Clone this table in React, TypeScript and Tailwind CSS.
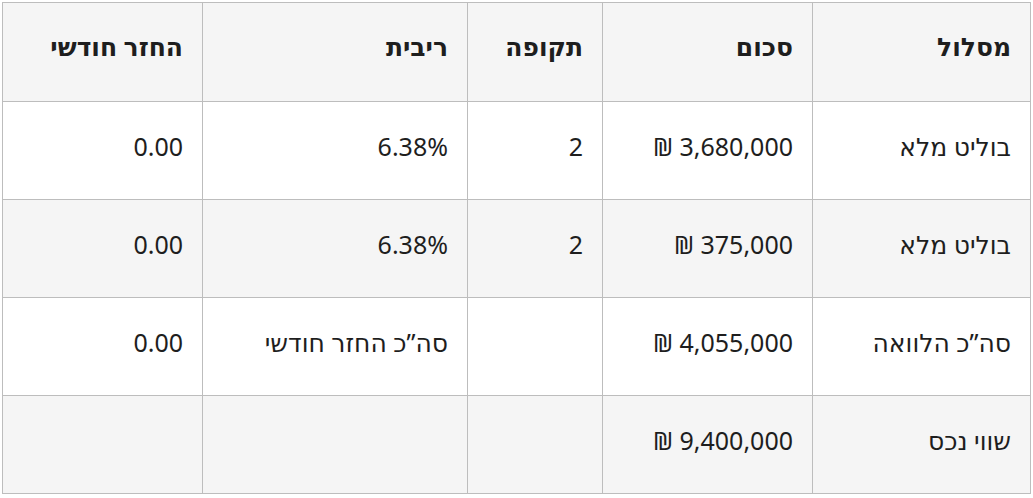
const rows: string[][] = [
  ["בוליט מלא", "3,680,000 ₪", "2", "6.38%", "0.00"],
  ["בוליט מלא", "375,000 ₪", "2", "6.38%", "0.00"],
  ["סה”כ הלוואה", "4,055,000 ₪", "", "סה”כ החזר חודשי", "0.00"],
  ["שווי נכס", "9,400,000 ₪", "", "", ""],
];

const headers = ["מסלול", "סכום", "תקופה", "ריבית", "החזר חודשי"];
const widths = ["w-[218px]", "w-[210px]", "w-[135px]", "w-[265px]", "w-[200px]"];

export default function App() {
  return (
    <div
      dir="rtl"
      className="p-[2px] bg-white text-[#1e1e1e]"
      style={{ fontFamily: '"Noto Sans", "DejaVu Sans", sans-serif' }}
    >
      <table className="w-[1029px] table-fixed border-collapse text-[25px]">
        <thead>
          <tr className="h-[99px] bg-[#f5f5f5]">
            {headers.map((h, i) => (
              <th
                key={h}
                className={`${widths[i]} border border-[#bdbdbd] px-[19px] pb-[10px] text-right font-bold`}
              >
                {h}
              </th>
            ))}
          </tr>
        </thead>
        <tbody>
          {rows.map((r, ri) => (
            <tr key={ri} className={`h-[98px] ${ri % 2 === 1 ? "bg-[#f5f5f5]" : "bg-white"}`}>
              {r.map((c, ci) => (
                <td key={ci} className="border border-[#bdbdbd] px-[19px] pb-[8px] text-right">
                  {c}
                </td>
              ))}
            </tr>
          ))}
        </tbody>
      </table>
    </div>
  );
}
